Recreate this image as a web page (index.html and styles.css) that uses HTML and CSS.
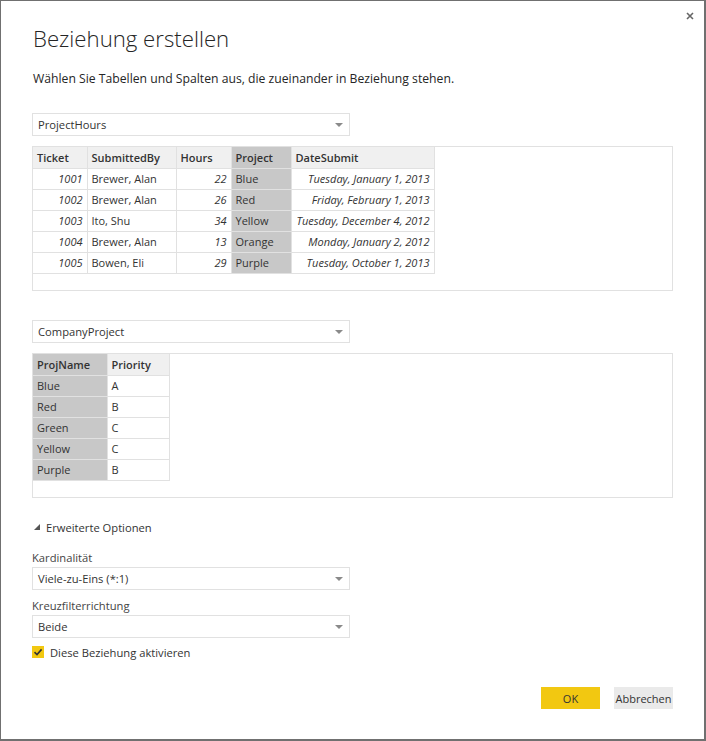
FILE: index.html
```html
<!DOCTYPE html>
<html lang="de">
<head>
<meta charset="utf-8">
<title>Beziehung erstellen</title>
<link rel="stylesheet" href="styles.css">
</head>
<body>
<div class="dialog">
  <button class="close" aria-label="Schließen">
    <svg width="8" height="8" viewBox="0 0 8 8"><path d="M1 1L7 7M7 1L1 7" stroke="#666" stroke-width="1.6"/></svg>
  </button>
  <h1 class="title">Beziehung erstellen</h1>
  <p class="subtitle">Wählen Sie Tabellen und Spalten aus, die zueinander in Beziehung stehen.</p>

  <div class="select sel-table1"><span>ProjectHours</span><i class="arrow"></i></div>
  <div class="grid-box">
    <table class="grid">
      <thead>
        <tr><th class="c-ticket">Ticket</th><th class="c-sub">SubmittedBy</th><th class="c-hours">Hours</th><th class="c-proj sel">Project</th><th class="c-date">DateSubmit</th></tr>
      </thead>
      <tbody>
        <tr><td class="num">1001</td><td>Brewer, Alan</td><td class="num">22</td><td class="sel">Blue</td><td class="num">Tuesday, January 1, 2013</td></tr>
        <tr><td class="num">1002</td><td>Brewer, Alan</td><td class="num">26</td><td class="sel">Red</td><td class="num">Friday, February 1, 2013</td></tr>
        <tr><td class="num">1003</td><td>Ito, Shu</td><td class="num">34</td><td class="sel">Yellow</td><td class="num">Tuesday, December 4, 2012</td></tr>
        <tr><td class="num">1004</td><td>Brewer, Alan</td><td class="num">13</td><td class="sel">Orange</td><td class="num">Monday, January 2, 2012</td></tr>
        <tr><td class="num">1005</td><td>Bowen, Eli</td><td class="num">29</td><td class="sel">Purple</td><td class="num">Tuesday, October 1, 2013</td></tr>
      </tbody>
    </table>
  </div>

  <div class="select sel-table2"><span>CompanyProject</span><i class="arrow"></i></div>
  <div class="grid-box">
    <table class="grid">
      <thead>
        <tr><th class="c-pname sel">ProjName</th><th class="c-prio">Priority</th></tr>
      </thead>
      <tbody>
        <tr><td class="sel">Blue</td><td>A</td></tr>
        <tr><td class="sel">Red</td><td>B</td></tr>
        <tr><td class="sel">Green</td><td>C</td></tr>
        <tr><td class="sel">Yellow</td><td>C</td></tr>
        <tr><td class="sel">Purple</td><td>B</td></tr>
      </tbody>
    </table>
  </div>

  <div class="advanced">
    <svg class="tri" width="6" height="6" viewBox="0 0 6 6"><polygon points="6,0 6,6 0,6" fill="#555"/></svg>
    <span>Erweiterte Optionen</span>
  </div>

  <div class="label label-first">Kardinalität</div>
  <div class="select"><span>Viele-zu-Eins (*:1)</span><i class="arrow"></i></div>
  <div class="label label-second">Kreuzfilterrichtung</div>
  <div class="select"><span>Beide</span><i class="arrow"></i></div>

  <label class="check">
    <span class="box"><svg width="12" height="12" viewBox="0 0 12 12"><path d="M2.5 6.2L5 8.6L9.6 3.4" fill="none" stroke="#333" stroke-width="1.6"/></svg></span>
    <span>Diese Beziehung aktivieren</span>
  </label>

  <div class="buttons">
    <button class="btn ok">OK</button>
    <button class="btn cancel">Abbrechen</button>
  </div>
</div>
</body>
</html>
```

FILE: styles.css
```css
* { box-sizing: border-box; }
html, body { margin: 0; padding: 0; background: #fff; }
body {
  font-family: "Open Sans", "Liberation Sans", sans-serif;
  color: #333;
}
.dialog {
  position: relative;
  width: 706px;
  height: 741px;
  border-style: solid;
  border-color: #707070;
  border-width: 1px 2px 2px 1px;
  padding: 0 31px 0 31px;
  display: flex;
  flex-direction: column;
}
.close {
  position: absolute;
  top: 10px;
  right: 9px;
  width: 10px;
  height: 10px;
  padding: 0;
  border: 0;
  background: none;
  display: flex;
  align-items: center;
  justify-content: center;
}
.title {
  margin: 20px 0 0 1px;
  font-weight: 300;
  font-size: 22.2px;
  line-height: 36px;
  color: #252525;
}
.subtitle {
  margin: 13px 0 0 1px;
  font-size: 12.2px;
  line-height: 18px;
  color: #252525;
}
.select {
  width: 318px;
  height: 23px;
  border: 1px solid #e1e1e1;
  display: flex;
  align-items: center;
  justify-content: space-between;
  padding: 0 6px 0 5px;
  font-size: 11.2px;
  color: #333;
  flex: none;
}
.arrow {
  width: 0; height: 0;
  border-left: 4px solid transparent;
  border-right: 4px solid transparent;
  border-top: 4px solid #8a8a8a;
}
.sel-table1 { margin-top: 25px; }
.sel-table2 { margin-top: 29px; }
.grid-box {
  margin-top: 10px;
  height: 145px;
  border: 1px solid #e1e1e1;
  flex: none;
}
.grid {
  border-collapse: collapse;
  font-size: 11px;
  color: #333;
}
.grid th, .grid td {
  height: 21px;
  padding: 0 4px;
  border: 1px solid #e1e1e1;
  white-space: nowrap;
  text-align: left;
}
.grid tr:first-child th { border-top: 0; }
.grid th:first-child, .grid td:first-child { border-left: 0; }
.grid th {
  font-weight: 600;
  background: #f0f0f0;
  color: #333;
}
.grid .sel { background: #c8c8c8; }
.grid .num { text-align: right; font-style: italic; }
.c-ticket { width: 54px; }
.c-sub { width: 89px; }
.c-hours { width: 55px; }
.c-proj { width: 60px; }
.c-date { width: 143px; }
.c-pname { width: 74px; }
.c-prio { width: 62px; }

.advanced {
  margin-top: 20px;
  display: flex;
  align-items: center;
  gap: 6px;
  font-size: 11.2px;
  height: 18px;
  padding-left: 2px;
}
.label {
  font-size: 11.2px;
  line-height: 18px;
  color: #444;
}
.label-first { margin-top: 13px; }
.label-second { margin-top: 7px; }
.check {
  margin-top: 6px;
  display: flex;
  align-items: center;
  gap: 6px;
  font-size: 11.2px;
  height: 16px;
}
.box {
  width: 12px; height: 12px;
  background: #f2c811;
  display: block;
}
.box svg { display: block; }
.buttons {
  margin-top: 27px;
  display: flex;
  justify-content: flex-end;
  gap: 14px;
}
.btn {
  width: 59px;
  height: 22px;
  border: 0;
  padding: 0;
  font-family: inherit;
  font-size: 11px;
  color: #333;
}
.ok { background: #f2c811; }
.cancel { background: #eaeaea; }
```
